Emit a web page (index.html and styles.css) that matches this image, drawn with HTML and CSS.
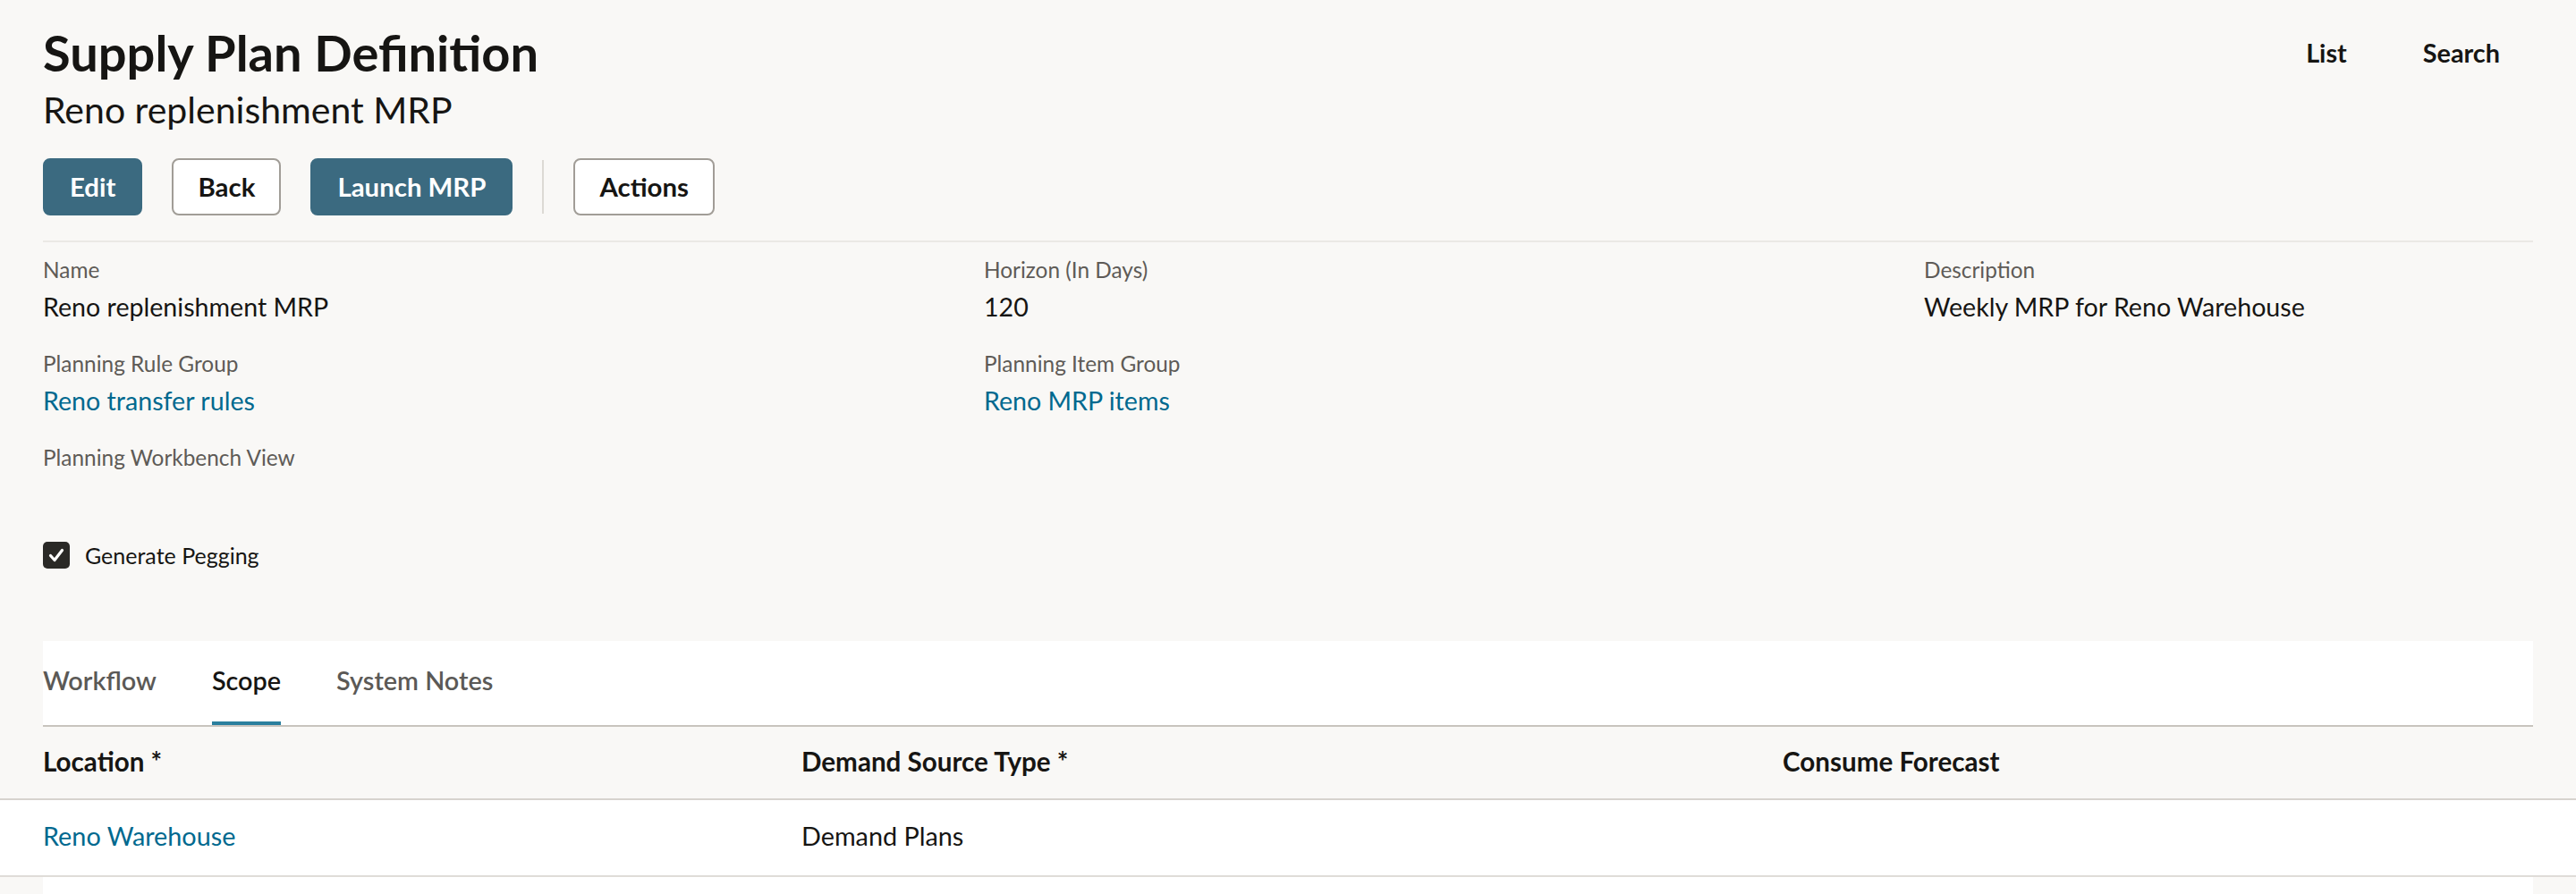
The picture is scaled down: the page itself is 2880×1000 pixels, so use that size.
FILE: index.html
```html
<!DOCTYPE html>
<html lang="en">
<head>
<meta charset="utf-8">
<title>Supply Plan Definition</title>
<link rel="stylesheet" href="styles.css">
</head>
<body>
<div class="page">
  <header class="page-header">
    <div class="title-block">
      <h1 class="title">Supply Plan Definition</h1>
      <div class="subtitle">Reno replenishment MRP</div>
    </div>
    <nav class="top-nav">
      <a class="top-link">List</a>
      <a class="top-link">Search</a>
    </nav>
  </header>

  <div class="toolbar">
    <button class="btn btn-primary">Edit</button>
    <button class="btn btn-outline">Back</button>
    <button class="btn btn-primary">Launch MRP</button>
    <span class="toolbar-sep"></span>
    <button class="btn btn-outline">Actions</button>
  </div>

  <div class="divider"></div>

  <div class="fields">
    <div class="field">
      <div class="field-label">Name</div>
      <div class="field-value">Reno replenishment MRP</div>
    </div>
    <div class="field">
      <div class="field-label">Horizon (In Days)</div>
      <div class="field-value">120</div>
    </div>
    <div class="field">
      <div class="field-label">Description</div>
      <div class="field-value">Weekly MRP for Reno Warehouse</div>
    </div>
    <div class="field">
      <div class="field-label">Planning Rule Group</div>
      <div class="field-value"><a class="link">Reno transfer rules</a></div>
    </div>
    <div class="field">
      <div class="field-label">Planning Item Group</div>
      <div class="field-value"><a class="link">Reno MRP items</a></div>
    </div>
    <div class="field"></div>
    <div class="field">
      <div class="field-label">Planning Workbench View</div>
      <div class="field-value"></div>
    </div>
  </div>

  <div class="checkbox-row">
    <span class="checkbox">
      <svg viewBox="0 0 30 30" width="30" height="30"><path d="M8.5 15.5 L13 20.5 L21.5 9.5" fill="none" stroke="#ffffff" stroke-width="3.2" stroke-linecap="round" stroke-linejoin="round"/></svg>
    </span>
    <span class="checkbox-label">Generate Pegging</span>
  </div>

  <div class="tabs">
    <span class="tab">Workflow</span>
    <span class="tab tab-active">Scope</span>
    <span class="tab">System Notes</span>
  </div>
</div>

<div class="table">
  <div class="table-row table-head">
    <div class="th">Location *</div>
    <div class="th">Demand Source Type *</div>
    <div class="th">Consume Forecast</div>
  </div>
  <div class="table-row table-body-row">
    <div class="td"><a class="link">Reno Warehouse</a></div>
    <div class="td">Demand Plans</div>
    <div class="td"></div>
  </div>
</div>
<div class="panel-below"></div>
</body>
</html>
```
FILE: styles.css
```css
* { box-sizing: border-box; }

html, body {
  margin: 0;
  padding: 0;
  background: #f9f8f6;
  color: #161513;
  font-family: Lato, "Liberation Sans", sans-serif;
}

.page {
  padding: 0 48px;
}

/* Header */
.page-header {
  display: flex;
  justify-content: space-between;
  align-items: flex-start;
  padding-top: 25px;
}

.title {
  margin: 0;
  font-size: 56px;
  line-height: 67px;
  font-weight: 700;
  color: #161513;
}

.subtitle {
  margin-top: 6px;
  font-size: 41px;
  line-height: 50px;
  font-weight: 400;
}

.top-nav {
  display: flex;
  gap: 85px;
  margin-top: 17px;
  margin-right: 37px;
}

.top-link {
  font-size: 28.8px;
  line-height: 35px;
  font-weight: 700;
  color: #161513;
  cursor: pointer;
}

/* Toolbar */
.toolbar {
  display: flex;
  align-items: center;
  gap: 33px;
  margin-top: 29px;
}

.btn {
  height: 64px;
  padding: 0 28px;
  border: 2px solid transparent;
  border-radius: 8px;
  font-family: Lato, "Liberation Sans", sans-serif;
  font-size: 29.4px;
  font-weight: 700;
  line-height: 1;
  cursor: pointer;
}

.btn-primary {
  background: #3b6a80;
  border-color: #3b6a80;
  color: #ffffff;
}

.btn-outline {
  background: #ffffff;
  border-color: #a19d97;
  color: #161513;
  padding: 0 27px;
}

.toolbar-sep {
  width: 2px;
  height: 60px;
  background: #dcd9d4;
}

.divider {
  margin-top: 28px;
  height: 2px;
  background: #ebe9e5;
}

/* Fields */
.fields {
  display: grid;
  grid-template-columns: 1052px 1051px 1fr;
  row-gap: 31px;
  padding-top: 16px;
}

.field-label {
  font-size: 24.4px;
  line-height: 29px;
  color: #5e5b57;
}

.field-value {
  margin-top: 10px;
  min-height: 35px;
  font-size: 28.6px;
  line-height: 35px;
  color: #161513;
}

.link {
  color: #00698f;
  cursor: pointer;
}

/* Checkbox */
.checkbox-row {
  display: flex;
  align-items: center;
  gap: 17px;
  margin-top: 35px;
  height: 30px;
}

.checkbox {
  width: 30px;
  height: 30px;
  border-radius: 5px;
  background: #2a2926;
  display: flex;
}

.checkbox-label {
  font-size: 25px;
  line-height: 30px;
  color: #161513;
}

/* Tabs */
.tabs {
  display: flex;
  gap: 62px;
  margin-top: 81px;
  background: #ffffff;
  border-bottom: 2px solid #c8c4be;
}

.tab {
  padding: 27px 0 28px;
  border-bottom: 4px solid transparent;
  font-size: 28.8px;
  line-height: 35px;
  font-weight: 600;
  color: #5b5956;
}

.tab-active {
  color: #161513;
  border-bottom-color: #2a7f9e;
}

/* Table */
.table-row {
  display: grid;
  grid-template-columns: 848px 1097px 1fr;
  padding-left: 48px;
}

.table-head {
  background: #f9f8f6;
  border-bottom: 2px solid #d7d3ce;
  padding-top: 21px;
  padding-bottom: 24px;
}

.th {
  font-size: 29.6px;
  line-height: 35px;
  font-weight: 700;
  color: #161513;
}

.table-body-row {
  background: #ffffff;
  border-bottom: 2px solid #dfdcd8;
  padding-top: 23px;
  padding-bottom: 26px;
}

.td {
  font-size: 28.8px;
  line-height: 35px;
  color: #161513;
}

.panel-below {
  margin: 0 48px;
  height: 60px;
  background: #ffffff;
}
```
